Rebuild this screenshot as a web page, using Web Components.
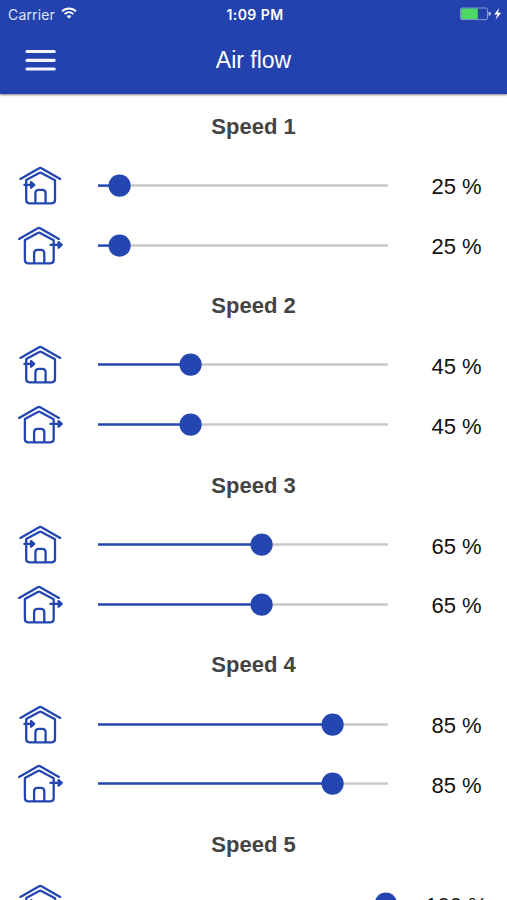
<!DOCTYPE html>
<html lang="en">
<head>
<meta charset="utf-8">
<title>Air flow</title>
<style>
  html, body {
    margin: 0;
    height: 100%;
    overflow: hidden;
    background: #fff;
    font-family: "Liberation Sans", Arial, sans-serif;
  }
</style>
</head>
<body>
<air-flow-screen></air-flow-screen>

<script>
class StatusBar extends HTMLElement {
  constructor() {
    super();
    this.attachShadow({ mode: 'open' });
  }

  connectedCallback() {
    this.shadowRoot.innerHTML = `
      <style>
        :host {
          display: grid;
          grid-template-columns: 1fr auto 1fr;
          align-items: center;
          height: 27px;
          padding: 0 5px 0 8px;
          color: #fff;
          font: 14px/27px Inter, sans-serif;
        }
        .left, .right {
          display: flex;
          align-items: center;
        }
        .left {
          gap: 6px;
          color: #dfe6fa;
          letter-spacing: 0.15px;
        }
        .left svg {
          margin-top: -2px;
        }
        .time {
          font-weight: 600;
          font-size: 14px;
          letter-spacing: 0.45px;
          padding-top: 1px;
        }
        .right {
          justify-content: flex-end;
        }
        svg {
          display: block;
        }
      </style>
      <div class="left">
        <span>Carrier</span>
        <svg width="16" height="12" viewBox="0 0 16 12" fill="none" stroke="#fff" stroke-width="1.9">
          <path d="M1 4.4C5 .5 11 .5 15 4.4"/>
          <path d="M3.6 7.1C6.2 4.7 9.8 4.7 12.4 7.1"/>
          <path d="M8 11.8 5.5 9.1C7 7.9 9 7.9 10.5 9.1Z" fill="#fff" stroke="none"/>
        </svg>
      </div>
      <span class="time">1:09 PM</span>
      <div class="right">
        <svg width="42" height="14" viewBox="0 0 42 14">
          <rect x=".5" y="1" width="27" height="11.6" rx="1.5" fill="none" stroke="#8798d4"/>
          <path d="M2 1.6H17.8V12H2Q1.2 12 1.2 11.2V2.4Q1.2 1.6 2 1.6Z" fill="#4cd964"/>
          <path d="M28.6 4.8Q31 5 31 6.8T28.6 8.8Z" fill="#c4cef0"/>
          <path d="M39.2 1 34.2 7.5H37.3L35.4 12.7 41.2 5.8H37.9Z" fill="#fff"/>
        </svg>
      </div>
    `;
  }
}

class NavBar extends HTMLElement {
  constructor() {
    super();
    this.attachShadow({ mode: 'open' });
  }

  connectedCallback() {
    this.shadowRoot.innerHTML = `
      <style>
        :host {
          display: grid;
          grid-template-columns: 56px 1fr 56px;
          align-items: center;
          height: 67px;
          color: #fff;
        }
        svg {
          display: block;
          margin-left: 25px;
        }
        h1 {
          margin: 0;
          font-weight: 400;
          font-size: 23px;
          line-height: 67px;
          text-align: center;
        }
      </style>
      <svg width="31" height="24" viewBox="0 0 31 24" stroke="#f3f6ff" stroke-width="3.2" stroke-linecap="round">
        <path d="M2 2.5H29.2M2 11.3H29.2M2 20H29.2"/>
      </svg>
      <h1><slot></slot></h1>
    `;
  }
}

class HouseIcon extends HTMLElement {
  constructor() {
    super();
    this.attachShadow({ mode: 'open' });
  }

  connectedCallback() {
    const out = this.getAttribute('direction') === 'out';
    const arrow = out
      ? '<path d="M32.8 29.4H43"/><path d="M40.9 26.6 44 29.4 40.9 32.2Z" fill="currentColor"/>'
      : '<path d="M5.4 29.4H14.5"/><path d="M12.1 26.6 15.2 29.4 12.1 32.2Z" fill="currentColor"/>';

    this.shadowRoot.innerHTML = `
      <style>
        :host {
          display: block;
          color: #2446b0;
        }
        svg {
          display: block;
          overflow: visible;
        }
      </style>
      <svg width="50" height="60" viewBox="${out ? '1.3' : '0'} 0.5 50 60" fill="none" stroke="currentColor"
           stroke-width="2.3" stroke-linecap="round" stroke-linejoin="round">
        <path d="M1.4 23.4 19.7 12.9Q21.3 12 22.9 12.9L41.2 23.4"/>
        <path d="M7.2 24.4 20.2 17.5Q21.3 16.9 22.4 17.5L36 24.8V44.6Q36 47.8 32.8 47.8H10.4Q7.2 47.8 7.2 44.6Z"/>
        <path d="M16.4 47.4V37.8Q16.4 34.4 19.8 34.4H23.2Q26.6 34.4 26.6 37.8V47.4"/>
        ${arrow}
      </svg>
    `;
  }
}

class FlowSlider extends HTMLElement {
  constructor() {
    super();
    this.attachShadow({ mode: 'open' });
  }

  connectedCallback() {
    const value = Number(this.getAttribute('value'));
    // the lowest speed is 19 %, so the scale does not start at zero
    const filled = 21.6 + (value - 25) * 3.55;

    this.shadowRoot.innerHTML = `
      <style>
        :host {
          display: block;
          width: 290px;
        }
        svg {
          display: block;
          overflow: visible;
        }
      </style>
      <svg width="290" height="24" viewBox="0 0.4 290 24">
        <path d="M${filled} 12H290" stroke="#c9c9c9" stroke-width="2.5"/>
        <path d="M0 12H${filled}" stroke="#2446b0" stroke-width="2.5"/>
        <circle cx="${filled}" cy="12" r="11.1" fill="#2446b0"/>
      </svg>
    `;
  }
}

class FlowRow extends HTMLElement {
  constructor() {
    super();
    this.attachShadow({ mode: 'open' });
  }

  connectedCallback() {
    const value = this.getAttribute('value');

    this.shadowRoot.innerHTML = `
      <style>
        :host {
          display: grid;
          grid-template-columns: 79px 290px 1fr;
          align-items: center;
          height: 59.87px;
          padding-left: 19px;
        }
        .value {
          padding: 3px 0 0 18px;
          color: #111;
          font-size: 22px;
          text-align: center;
        }
      </style>
      <house-icon direction="${this.getAttribute('direction')}"></house-icon>
      <flow-slider value="${value}"></flow-slider>
      <div class="value">${value} %</div>
    `;
  }
}

class SpeedGroup extends HTMLElement {
  constructor() {
    super();
    this.attachShadow({ mode: 'open' });
  }

  connectedCallback() {
    const value = this.getAttribute('value');

    this.shadowRoot.innerHTML = `
      <style>
        :host {
          display: block;
        }
        h2 {
          box-sizing: border-box;
          height: 59.87px;
          margin: 0;
          padding-top: 0.6px;
          color: #444;
          font-size: 22px;
          line-height: 59.87px;
          text-align: center;
        }
      </style>
      <h2><slot></slot></h2>
      <flow-row direction="in" value="${value}"></flow-row>
      <flow-row direction="out" value="${value}"></flow-row>
    `;
  }
}

class AirFlowScreen extends HTMLElement {
  constructor() {
    super();
    this.attachShadow({ mode: 'open' });
  }

  connectedCallback() {
    this.shadowRoot.innerHTML = `
      <style>
        :host {
          display: flex;
          flex-direction: column;
          height: 900px;
          overflow: hidden;
        }
        header {
          flex: none;
          background: #2442ae;
          box-shadow: 0 1px 2px rgba(0, 0, 0, 0.5);
        }
        main {
          flex: 1;
          min-height: 0;
          padding-top: 2px;
          overflow: hidden;
        }
      </style>
      <header>
        <status-bar></status-bar>
        <nav-bar>Air flow</nav-bar>
      </header>
      <main>
        <speed-group value="25">Speed 1</speed-group>
        <speed-group value="45">Speed 2</speed-group>
        <speed-group value="65">Speed 3</speed-group>
        <speed-group value="85">Speed 4</speed-group>
        <speed-group value="100">Speed 5</speed-group>
      </main>
    `;
  }
}

customElements.define('status-bar', StatusBar);
customElements.define('nav-bar', NavBar);
customElements.define('house-icon', HouseIcon);
customElements.define('flow-slider', FlowSlider);
customElements.define('flow-row', FlowRow);
customElements.define('speed-group', SpeedGroup);
customElements.define('air-flow-screen', AirFlowScreen);
</script>
</body>
</html>
